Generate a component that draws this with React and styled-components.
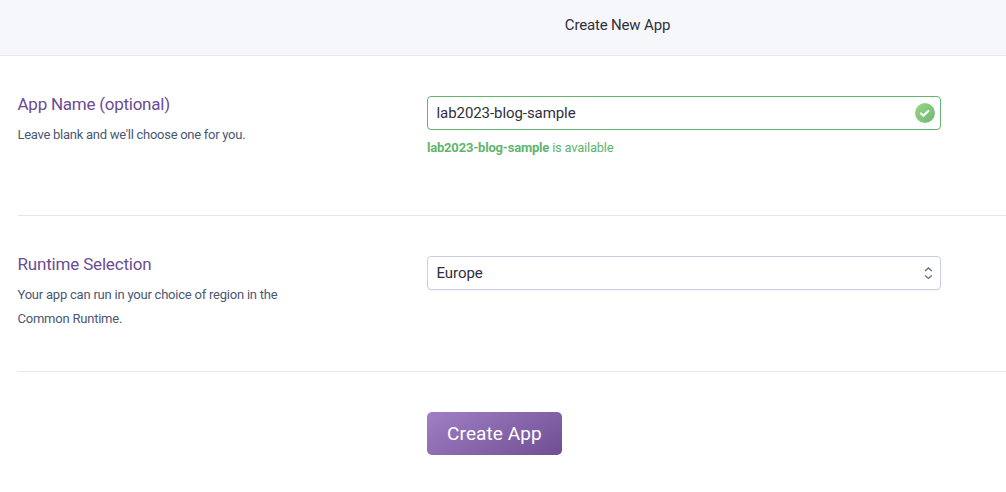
import React from "react";
import styled, { createGlobalStyle } from "styled-components";

const GlobalStyle = createGlobalStyle`
  *, *::before, *::after { box-sizing: border-box; }
  body {
    margin: 0;
    background: #fff;
    color: #2f2f3b;
    font-family: Roboto, "Liberation Sans", sans-serif;
    overflow: hidden;
  }
`;

const Page = styled.div`
  display: flex;
  flex-direction: column;
  height: 492px;
`;

const Header = styled.header`
  display: flex;
  justify-content: center;
  height: 56px;
  padding: 13px 0 0 229px;
  background: #f5f7fb;
  border-bottom: 1px solid #e3e7ef;
`;

const PageTitle = styled.h1`
  margin: 0;
  font-size: 15px;
  font-weight: 400;
  line-height: 24px;
  letter-spacing: -0.17px;
`;

const Form = styled.form`
  display: flex;
  flex-direction: column;
  margin-left: 18px;
`;

const Row = styled.section`
  display: grid;
  grid-template-columns: 409px 514px;
  align-items: start;
  height: ${(p) => p.$height}px;
  padding-top: 40px;
  border-bottom: ${(p) => (p.$last ? "0" : "1px solid #e6e6f2")};
`;

const RowText = styled.div`
  margin-left: -0.5px;
`;

const RowLabel = styled.h2`
  height: 26px;
  margin: -8px 0 0;
  padding-top: 4px;
  color: #6b4c94;
  font-size: 17px;
  font-weight: 400;
  line-height: 24px;
  letter-spacing: ${(p) => p.$spacing}px;
`;

const RowHint = styled.p`
  width: 275px;
  margin: 9px 0 0;
  color: #4a5874;
  font-size: 13px;
  line-height: 24px;
  letter-spacing: ${(p) => p.$spacing}px;
`;

const Field = styled.div`
  display: flex;
  align-items: center;
  justify-content: space-between;
  height: 34px;
  padding: 0 5px 0 8.5px;
  background: #fff;
  border: 1px solid ${(p) => (p.$valid ? "#62b56e" : "#c6cfe3")};
  border-radius: 4px;
  box-shadow: ${(p) => (p.$valid ? "none" : "0 1px 2px rgba(90, 105, 150, 0.07)")};
`;

const Value = styled.span`
  font-size: 15px;
  line-height: 24px;
  letter-spacing: -0.07px;
`;

const Availability = styled.p`
  margin: 6px 0 0;
  color: #62b56e;
  font-size: 13px;
  line-height: 24px;
  letter-spacing: -0.24px;
  white-space: nowrap;
`;

const AppName = styled.strong`
  font-weight: 700;
  letter-spacing: -0.2px;
`;

const SubmitButton = styled.button`
  width: 135px;
  height: 43px;
  padding: 0;
  border: 0;
  border-radius: 5px;
  background: linear-gradient(150deg, #a17fc5 0%, #704e94 100%);
  color: #fff;
  font: 400 19px/43px Roboto, "Liberation Sans", sans-serif;
  letter-spacing: 0.1px;
`;

const CheckIcon = () => (
  <svg width="20" height="20" viewBox="0 0 20 20">
    <defs>
      <linearGradient id="check-fill" x1="0" y1="0" x2="1" y2="1">
        <stop offset="0" stopColor="#9bd77f" />
        <stop offset="1" stopColor="#6bb878" />
      </linearGradient>
    </defs>
    <circle cx="10" cy="10" r="10" fill="url(#check-fill)" />
    <path d="M6 10.5 8.4 12.8 13.3 8" fill="none" stroke="#fff" strokeWidth="2.2" strokeLinecap="round" strokeLinejoin="round" />
  </svg>
);

const SelectIcon = () => (
  <svg width="14" height="14" viewBox="0 0 14 14" fill="none" stroke="#6f6d80" strokeWidth="1.4">
    <path d="M4 4.9 7.4 1.9 10.8 4.9M4 9.4 7.4 12.4 10.8 9.4" />
  </svg>
);

export default function App() {
  return (
    <Page>
      <GlobalStyle />
      <Header>
        <PageTitle>Create New App</PageTitle>
      </Header>
      <Form>
        <Row $height={160}>
          <RowText>
            <RowLabel $spacing={-0.25}>App Name (optional)</RowLabel>
            <RowHint $spacing={-0.27}>Leave blank and we'll choose one for you.</RowHint>
          </RowText>
          <div>
            <Field $valid>
              <Value>lab2023-blog-sample</Value>
              <CheckIcon />
            </Field>
            <Availability>
              <AppName>lab2023-blog-sample</AppName> is available
            </Availability>
          </div>
        </Row>
        <Row $height={156}>
          <RowText>
            <RowLabel $spacing={-0.18}>Runtime Selection</RowLabel>
            <RowHint $spacing={-0.22}>Your app can run in your choice of region in the Common Runtime.</RowHint>
          </RowText>
          <Field>
            <Value>Europe</Value>
            <SelectIcon />
          </Field>
        </Row>
        <Row $height={120} $last>
          <div />
          <SubmitButton type="button">Create App</SubmitButton>
        </Row>
      </Form>
    </Page>
  );
}
